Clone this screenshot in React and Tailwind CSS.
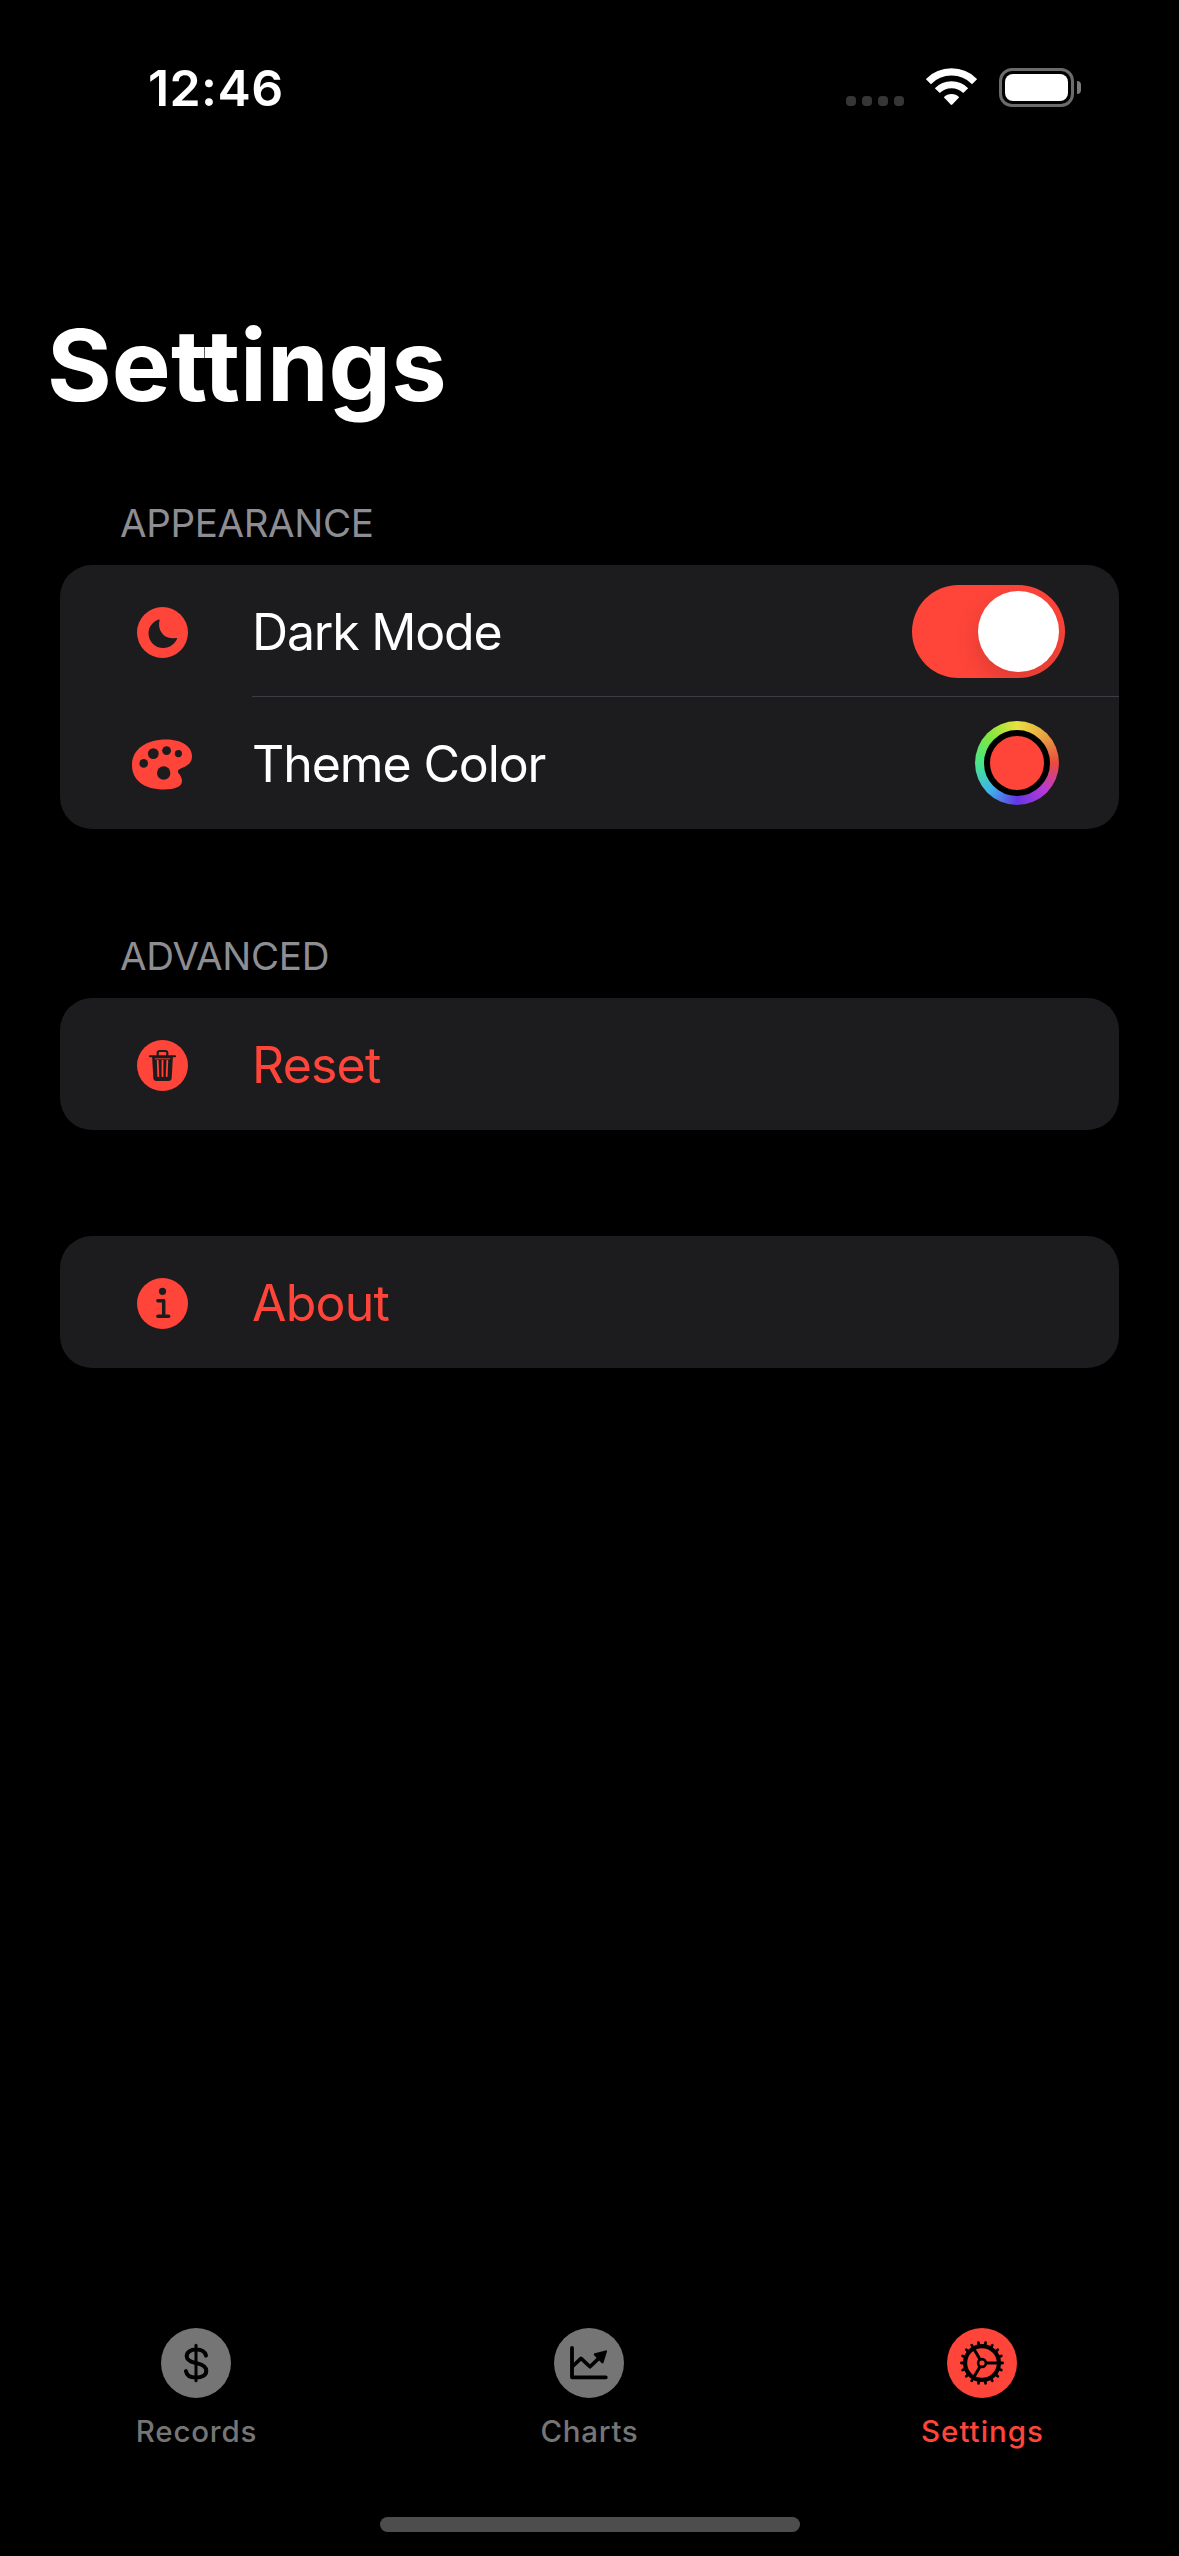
const CARD = "#1c1c1e";

function MoonIcon() {
  return (
    <svg width="60" height="51" viewBox="-0.5 0 60 51">
      <circle cx="30" cy="25.5" r="25.5" fill="#ff453a" />
      <path
        d="M26.1 12.5C27 12.2 27.3 12.7 27 13.6C24.6 23.2 31.6 33.4 43.4 31C44.4 30.8 44.9 31.2 44.5 32.1C42.2 37.2 37.2 41 31 41C22.4 41 16 34.6 16 26.2C16 20.2 20 14.6 26.1 12.5Z"
        fill={CARD}
      />
    </svg>
  );
}

function PaletteIcon() {
  return (
    <svg width="60" height="51" viewBox="0 0 60 51">
      <path
        d="M34 0.5C49 0.5 60 7 60 17.2C60 23.5 56.5 26 51 28.6C47.5 30.2 45.8 31 45.8 32.4C45.8 34.2 50 37 50 42C50 47.6 43 50.5 32 50.5C13 50.5 0 42 0 26C0 10.5 14 0.5 34 0.5Z"
        fill="#ff453a"
      />
      <circle cx="21.3" cy="14.6" r="5.4" fill={CARD} />
      <circle cx="34.6" cy="11.6" r="4.4" fill={CARD} />
      <circle cx="46.4" cy="14.6" r="3.6" fill={CARD} />
      <circle cx="11.7" cy="24.4" r="4.3" fill={CARD} />
      <circle cx="31.7" cy="34" r="6.7" fill={CARD} />
    </svg>
  );
}

function TrashIcon() {
  return (
    <svg width="60" height="51" viewBox="-0.5 0 60 51">
      <circle cx="30" cy="25.5" r="25.5" fill="#ff453a" />
      <g fill="none" stroke={CARD} strokeLinecap="round" strokeLinejoin="round">
        <path d="M25.2 15.5V13C25.2 11.7 26 11 27.2 11H32.8C34 11 34.8 11.7 34.8 13V15.5" strokeWidth="2.2" />
        <path d="M17.4 16.3H42.6" strokeWidth="2" />
      </g>
      <path d="M19.6 16.5H40.4L39.2 38C39.1 39.8 37.9 41 36 41H24C22.1 41 20.9 39.8 20.8 38Z" fill={CARD} />
      <path d="M25.2 20.6L25.8 36.2M30 20.6V36.2M34.8 20.6L34.2 36.2" stroke="#ff453a" strokeWidth="1.8" strokeLinecap="round" />
      <path d="M22.3 18.8H37.7" stroke="#ff453a" strokeWidth="0.9" />
    </svg>
  );
}

function InfoIcon() {
  return (
    <svg width="60" height="51" viewBox="-0.5 0 60 51">
      <circle cx="30" cy="25.5" r="25.5" fill="#ff453a" />
      <circle cx="30" cy="13.3" r="3.6" fill={CARD} />
      <path d="M25.4 22.8H31.2V38.2M25.4 38.2H36.2" fill="none" stroke={CARD} strokeWidth="3.5" strokeLinecap="round" strokeLinejoin="round" />
    </svg>
  );
}

function DollarIcon() {
  return (
    <svg className="mr-px" width="70" height="70" viewBox="0 0 70 70">
      <circle cx="35" cy="35" r="35" fill="#757575" />
      <g fill="none" stroke="#000" strokeLinecap="round">
        <path d="M45 27.6C44 23.7 40.4 21.6 35.2 21.6C29.6 21.6 25.7 24.1 25.7 28.2C25.7 31.9 28.6 33.5 34.2 34.9L36.4 35.4C42 36.8 45.3 38.5 45.3 42.8C45.3 47.3 41 49.6 35 49.6C29.3 49.6 25.7 47.3 24.9 43.1" strokeWidth="4" />
        <path d="M35 17.3V52.7" strokeWidth="3" />
      </g>
    </svg>
  );
}

function ChartIcon() {
  return (
    <svg className="mr-px" width="70" height="70" viewBox="0 0 70 70">
      <circle cx="35" cy="35" r="35" fill="#757575" />
      <g fill="none" stroke="#000" strokeLinecap="round" strokeLinejoin="round">
        <path d="M18 20V49.3H51.8" strokeWidth="3.8" />
        <path d="M18.5 38.5L27 30.4L36 38.8L46.5 28.6" strokeWidth="3.6" />
      </g>
      <path d="M40.8 25.3L51.6 22.4C52.6 22.1 53.2 22.8 52.9 23.7L49.6 34.4C49.3 35.5 48.3 35.7 47.6 34.9L40.3 27.4C39.5 26.6 39.7 25.6 40.8 25.3Z" fill="#000" />
    </svg>
  );
}

const teeth = Array.from({ length: 18 }, (_, i) => i * 20);

function GearIcon() {
  return (
    <svg className="mr-px" width="70" height="70" viewBox="0 0 70 70">
      <circle cx="35" cy="35" r="35" fill="#ff453a" />
      <g fill="none" stroke="#000">
        <circle cx="35" cy="35" r="16.9" strokeWidth="4.2" />
        {teeth.map((a) => (
          <path key={a} d="M53 35H55.6" strokeWidth="2.8" strokeLinecap="round" transform={`rotate(${a} 35 35)`} />
        ))}
        <circle cx="35" cy="35" r="3.9" strokeWidth="2.6" />
        {[0, 120, 240].map((a) => (
          <path key={a} d="M39.5 35H52" strokeWidth="3" transform={`rotate(${a} 35 35)`} />
        ))}
      </g>
    </svg>
  );
}

function WifiIcon() {
  return (
    <svg width="51" height="38" viewBox="0 0 51 38">
      <g fill="none" stroke="#fff">
        <path d="M2.4 13.6A32.5 32.5 0 0 1 48.6 13.6" strokeWidth="7.2" />
        <path d="M11.3 22.6A20 20 0 0 1 39.7 22.6" strokeWidth="7" />
      </g>
      <path d="M17.8 29.2A11 11 0 0 1 33.2 29.2L26.3 36.6Q25.5 37.3 24.7 36.6Z" fill="#fff" />
    </svg>
  );
}

function StatusBar() {
  return (
    <header className="flex h-[162px] shrink-0 items-start justify-between pl-[148px] pr-[98px]">
      <div className="mt-[58px] text-[50px] font-semibold leading-[60px] tracking-[0.4px]">12:46</div>
      <div className="mt-[68px] flex">
        <div className="mt-[28px] flex gap-[6px]">
          <span className="size-[10px] rounded-[4px] bg-[#363636]" />
          <span className="size-[10px] rounded-[4px] bg-[#363636]" />
          <span className="size-[10px] rounded-[4px] bg-[#363636]" />
          <span className="size-[10px] rounded-[4px] bg-[#363636]" />
        </div>
        <div className="ml-[22px]">
          <WifiIcon />
        </div>
        <div className="ml-[22px] flex items-center gap-[3px] self-start">
          <div className="h-[39px] w-[75px] rounded-[13px] border-[3px] border-[#6b6b6b] p-[3px]">
            <div className="h-full w-full rounded-[8px] bg-white" />
          </div>
          <div className="h-[13px] w-[4px] rounded-r-full bg-[#7a7a7a]" />
        </div>
      </div>
    </header>
  );
}

function Row({ icon, children, trailing, divider }) {
  return (
    <div className="flex h-[132px] pl-[72px]">
      <div className="flex w-[60px] shrink-0 items-center pt-[3px]">{icon}</div>
      <div className={`ml-[60px] flex flex-1 items-center justify-between ${divider ? "border-b border-[#3d3d41]" : ""}`}>
        <span className="pt-[2px] text-[50px] leading-[60px]">{children}</span>
        {trailing}
      </div>
    </div>
  );
}

function Toggle() {
  return (
    <div className="mr-[54px] mt-[2px] flex h-[93px] w-[153px] justify-end overflow-hidden rounded-full bg-[#ff453a] p-[6px]">
      <div className="size-[81px] rounded-full bg-white shadow-[0_9px_24px_rgba(0,0,0,0.15)]" />
    </div>
  );
}

function ColorWell() {
  return (
    <div className="mr-[60px] flex size-[84px] items-center justify-center rounded-full bg-[conic-gradient(#e8e23e,#e8a344_45deg,#ea4a3c_90deg,#b73ad8_135deg,#6535e6_180deg,#3fb4ea_225deg,#48e68a_270deg,#83e63c_315deg,#e8e23e)]">
      <div className="size-[66px] rounded-full border-[6px] border-black bg-[#ff453a]" />
    </div>
  );
}

function Tab({ icon, label, className }) {
  return (
    <div className={`flex flex-1 flex-col items-center ${className}`}>
      {icon}
      <span className="mt-[15px] text-[29.5px] font-medium leading-[36px]">{label}</span>
    </div>
  );
}

export default function App() {
  return (
    <div className="flex h-[2556px] w-[1179px] flex-col overflow-hidden bg-black font-['Inter',sans-serif] text-white">
      <StatusBar />
      <main className="flex flex-1 flex-col">
        <h1 className="mt-[143px] pl-[47px] text-[99px] font-bold leading-[120px] tracking-[0.05px] [font-variant-ligatures:none]">Settings</h1>
        <h2 className="mt-[75px] pl-[120px] text-[38.5px] leading-[46px] tracking-[-0.35px] text-[#8d8d93]">APPEARANCE</h2>
        <section className="ml-[60px] mt-[19px] w-[1059px] rounded-[32px] bg-[#1c1c1e]">
          <Row icon={<MoonIcon />} trailing={<Toggle />} divider>
            <span className="tracking-[-1.2px]">Dark Mode</span>
          </Row>
          <Row icon={<PaletteIcon />} trailing={<ColorWell />}>
            <span className="tracking-[-1.1px]">Theme Color</span>
          </Row>
        </section>
        <h2 className="mt-[104px] pl-[120px] text-[38.5px] leading-[46px] tracking-[-0.3px] text-[#8d8d93]">ADVANCED</h2>
        <section className="ml-[60px] mt-[19px] w-[1059px] rounded-[32px] bg-[#1c1c1e] text-[#ff453a]">
          <Row icon={<TrashIcon />}>
            <span className="tracking-[-0.8px]">Reset</span>
          </Row>
        </section>
        <section className="ml-[60px] mt-[106px] w-[1059px] rounded-[32px] bg-[#1c1c1e] text-[#ff453a]">
          <Row icon={<InfoIcon />}>
            <span className="tracking-[-0.8px]">About</span>
          </Row>
        </section>
      </main>
      <nav className="flex h-[189px] shrink-0">
        <Tab icon={<DollarIcon />} label="Records" className="tracking-[0.8px] text-[#757575]" />
        <Tab icon={<ChartIcon />} label="Charts" className="tracking-[0.7px] text-[#757575]" />
        <Tab icon={<GearIcon />} label="Settings" className="tracking-[1px] text-[#ff453a]" />
      </nav>
      <div className="mb-[24px] ml-[380px] h-[15px] w-[420px] shrink-0 rounded-full bg-[#4d4d4d]" />
    </div>
  );
}
